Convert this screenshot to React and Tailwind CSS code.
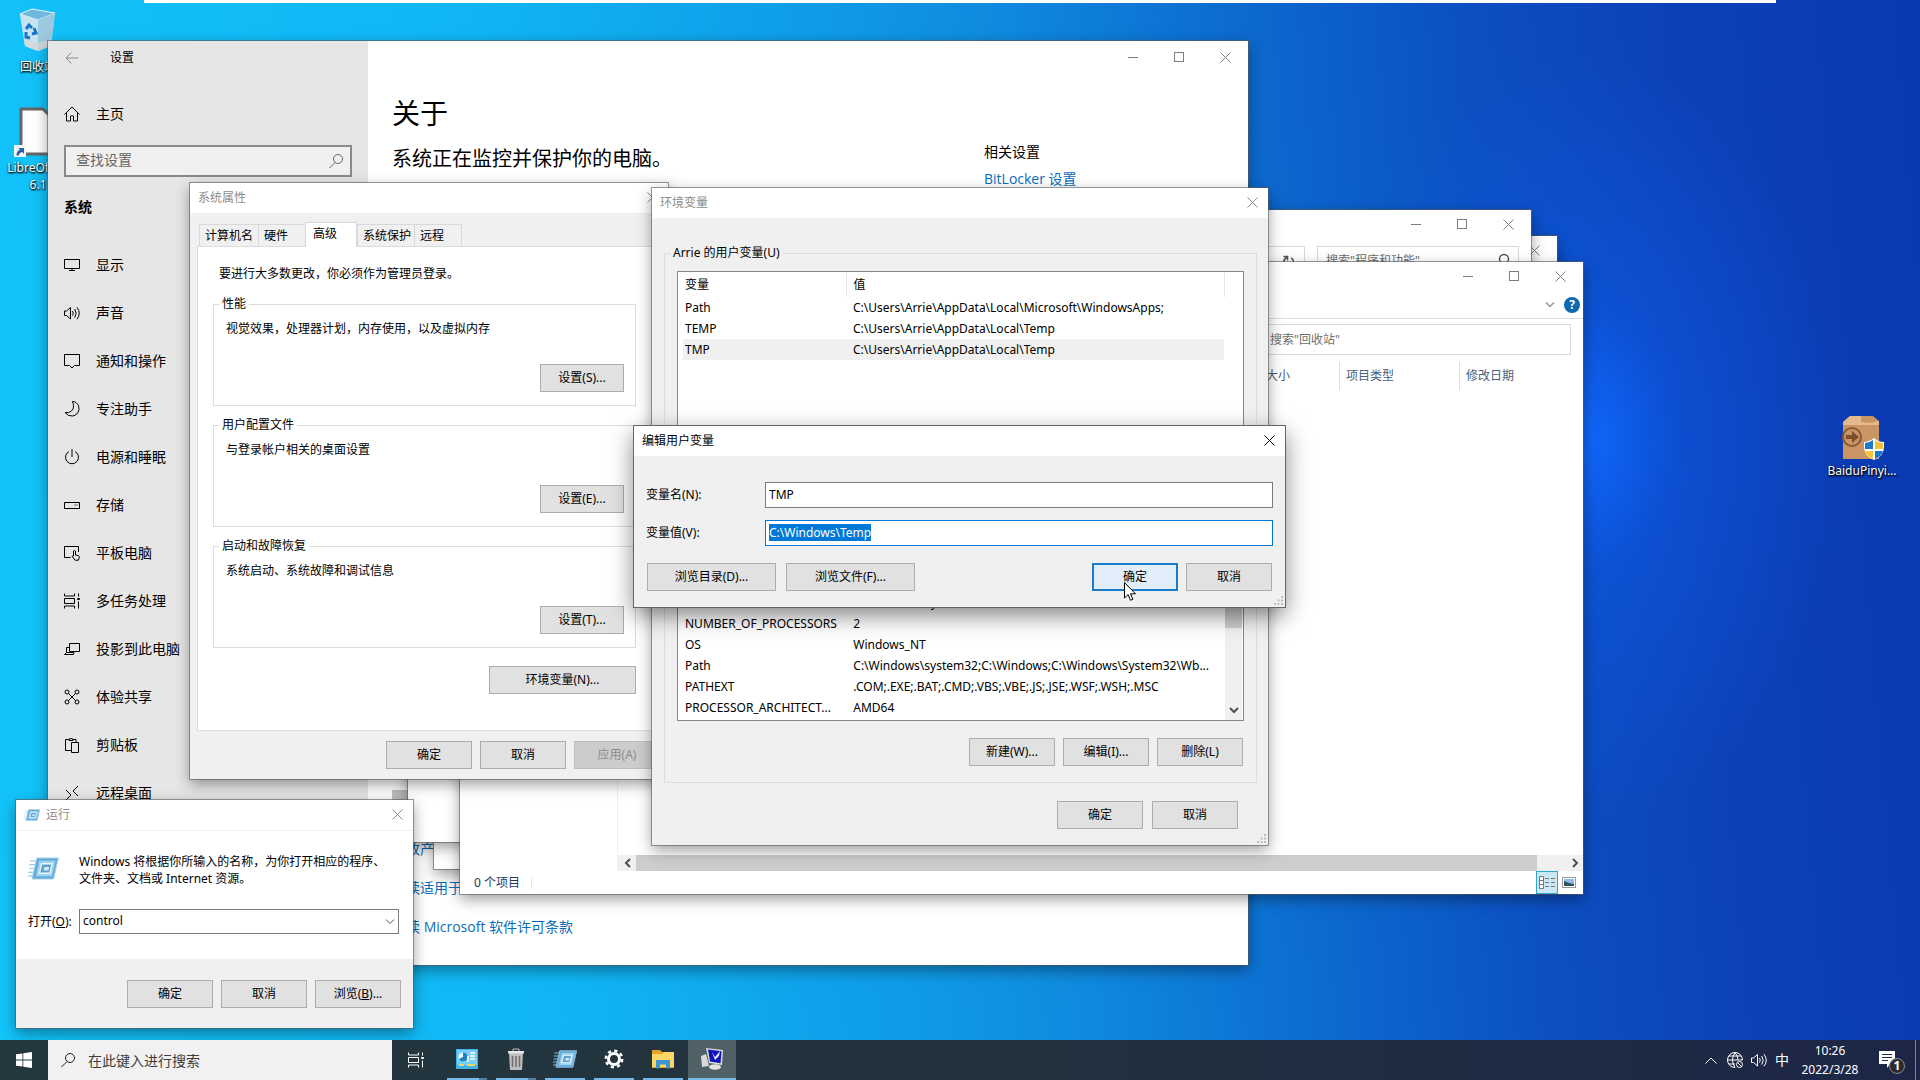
import { useEffect, useRef } from "react";
import clsx from "clsx";

const shadow =
  "shadow-[0_0_0_1px_rgba(90,90,90,0.6),0_5px_14px_rgba(0,0,0,0.4)]";

const navItems = [
  { label: "显示", icon: "display" },
  { label: "声音", icon: "sound" },
  { label: "通知和操作", icon: "notify" },
  { label: "专注助手", icon: "moon" },
  { label: "电源和睡眠", icon: "power" },
  { label: "存储", icon: "storage" },
  { label: "平板电脑", icon: "tablet" },
  { label: "多任务处理", icon: "tasks" },
  { label: "投影到此电脑", icon: "project" },
  { label: "体验共享", icon: "share" },
  { label: "剪贴板", icon: "clipboard" },
  { label: "远程桌面", icon: "remote" },
];

const userVars = [
  ["Path", "C:\\Users\\Arrie\\AppData\\Local\\Microsoft\\WindowsApps;"],
  ["TEMP", "C:\\Users\\Arrie\\AppData\\Local\\Temp"],
  ["TMP", "C:\\Users\\Arrie\\AppData\\Local\\Temp"],
];

const systemVars = [
  ["DriverData", "C:\\Windows\\System32\\Drivers\\DriverData"],
  ["NUMBER_OF_PROCESSORS", "2"],
  ["OS", "Windows_NT"],
  ["Path", "C:\\Windows\\system32;C:\\Windows;C:\\Windows\\System32\\Wb..."],
  ["PATHEXT", ".COM;.EXE;.BAT;.CMD;.VBS;.VBE;.JS;.JSE;.WSF;.WSH;.MSC"],
  ["PROCESSOR_ARCHITECT...", "AMD64"],
];

const tabs = [
  { label: "计算机名", width: "w-[60px]" },
  { label: "硬件", width: "w-12" },
  { label: "高级", width: "w-[52px]" },
  { label: "系统保护", width: "w-[58px]" },
  { label: "远程", width: "w-12" },
];

const groups = [
  { title: "性能", text: "视觉效果，处理器计划，内存使用，以及虚拟内存", key: "S" },
  { title: "用户配置文件", text: "与登录帐户相关的桌面设置", key: "E" },
  { title: "启动和故障恢复", text: "系统启动、系统故障和调试信息", key: "T" },
];

const glyphs = {
  back: <path d="M14 8H2M7.500 2.500L2 8l5.500 5.500" />,
  home: <path d="M2.500 7v8h4v-5h3v5h4V7M.500 8.500L8 1l7.500 7.500" />,
  search: (
    <>
      <circle cx="10" cy="6" r="4.500" />
      <path d="M7 9.500L1.500 15" />
    </>
  ),
  display: <path d="M.5 2.500h15v9H.5zM8 11.500v2M5 13.500h6" />,
  sound: (
    <path d="M.5 6v4.500h2L6.500 14V2.500L2.500 6zM8.500 6q1.500 2.200 0 4.500M10.700 4q3 4.200 0 8.500M13 2.300q4.500 6 0 11.900" />
  ),
  notify: <path d="M.5 1.500h15v11h-5L8 15l-2.500-2.500h-5z" />,
  moon: <path d="M8.500.5Q11 7 7.500 10 4.500 12.500 1 11.500 4 15.500 8.500 15q5.500-1 6.500-6.500.5-5-3-7-1.500-1-3.500-1z" />,
  power: <path d="M8 0v8M5 2.500a6.500 6.500 0 1 0 6 0" />,
  storage: <path d="M.5 5.500h15v6H.5zM12.500 8h1M10.500 8h1" />,
  tablet: (
    <path d="M6.500 12.500h-6v-11h14V7M9.500 11V6q1-1 2 0v4l3 .7q1 .5.8 1.500l-.8 3h-3.500l-3-4z" />
  ),
  tasks: (
    <path d="M.5.500v2.500h10V.500M.500 5.500h10v5H.500zM.500 15.500V13h10v2.500M14.500.500v3M14.500 8.500v7M13.500 5.500h2v1h-2z" />
  ),
  project: <path d="M5.500 2.500h10v8h-10zM5.500 6.500h-3v5h7v-1M2.500 11.500l-2 2h9l.5-2" />,
  share: (
    <>
      <circle cx="3" cy="3" r="2" />
      <circle cx="13" cy="3" r="2" />
      <circle cx="3" cy="13" r="2" />
      <circle cx="13" cy="13" r="2" />
      <path d="M4.500 4.500l7 7M11.500 4.500l-7 7" />
    </>
  ),
  clipboard: (
    <path d="M7 13.500H1.500v-11H5M9 2.500h3V5M5 3.500v-1.500h1.200q.8-2 1.600 0H9v1.500zM7.500 5.500h7v10h-7z" />
  ),
  remote: <path d="M2 5l5 5-5 5M14 1L9 6l5 5" />,
};

function Icon({ name, className }) {
  return (
    <svg
      viewBox="0 0 16 16"
      aria-hidden="true"
      className={clsx("h-4 w-4 shrink-0 fill-none stroke-current", className)}
    >
      {glyphs[name]}
    </svg>
  );
}

function CloseGlyph() {
  return (
    <svg viewBox="0 0 11 11" aria-hidden="true" className="h-[11px] w-[11px] stroke-current">
      <path d="M.5.500l10 10M10.500.500l-10 10" />
    </svg>
  );
}

function Caption() {
  return (
    <div className="ml-auto flex text-[#7d7d7d]">
      <button type="button" aria-label="最小化" className="flex h-7 w-[46px] items-center justify-center">
        <span className="h-px w-[10px] bg-current" />
      </button>
      <button type="button" aria-label="最大化" className="flex h-7 w-[46px] items-center justify-center">
        <span className="h-[10px] w-[10px] border border-current" />
      </button>
      <button type="button" aria-label="关闭" className="flex h-7 w-[46px] items-center justify-center">
        <CloseGlyph />
      </button>
    </div>
  );
}

function Window({ label, className, children }) {
  return (
    <section
      aria-label={label}
      className={clsx("absolute flex flex-col overflow-hidden bg-white", className)}
    >
      {children}
    </section>
  );
}

function DialogTitle({ active, icon, children }) {
  return (
    <header
      className={clsx(
        "flex h-[30px] shrink-0 items-center gap-1.5 bg-white pl-2",
        active ? "text-black" : "text-[#8c8c8c]"
      )}
    >
      {icon}
      <h2>{children}</h2>
      <button
        type="button"
        aria-label="关闭"
        className="ml-auto flex h-7 w-[31px] items-center justify-center self-start"
      >
        <CloseGlyph />
      </button>
    </header>
  );
}

function Button({ className = "w-[86px]", primary, children, ...rest }) {
  return (
    <button
      type="button"
      className={clsx(
        "h-7 shrink-0 text-center",
        primary
          ? "border-2 border-[#1a7cc9] bg-[#e1eefa]"
          : "border border-[#adadad] bg-[#e1e1e1] disabled:border-[#bfbfbf] disabled:bg-[#cccccc] disabled:text-[#8c8c8c]",
        className
      )}
      {...rest}
    >
      {children}
    </button>
  );
}

// Both kinds of group have 12px of left padding, which the legend steps back over.
function Group({ title, className, children, ...rest }) {
  return (
    <fieldset className={clsx("flex flex-col border border-[#dcdcdc]", className)} {...rest}>
      {title && <legend className="-ml-[7px] px-[3px] leading-[18px]">{title}</legend>}
      {children}
    </fieldset>
  );
}

function Grip() {
  return (
    <svg viewBox="0 0 9 9" aria-hidden="true" className="absolute right-0.5 bottom-0.5 h-[9px] w-[9px] fill-[#bdbdbd]">
      <path d="M7 0h2v2H7zM7 3.500h2v2H7zM3.500 3.500h2v2h-2zM7 7h2v2H7zM3.500 7h2v2h-2zM0 7h2v2H0z" />
    </svg>
  );
}

function RunIcon({ className }) {
  return (
    <svg viewBox="0 0 32 24" aria-hidden="true" className={className}>
      <path d="M2 4h8M1 8h8M1 12h7M0 16h7M0 20h6" stroke="#9ccdeb" strokeWidth="1.200" />
      <path d="M9 1h22.500l-5 22H4z" fill="#64abd9" stroke="#a9d3ec" />
      <path d="M11.500 4h17l-3.600 16H8z" fill="#9ed2f1" />
      <path d="M14 7h11l-2.300 10h-11z" fill="#5aa3d4" stroke="#e9f6fd" strokeWidth="1.500" />
      <path d="M17 10.500h5l-.8 3.500h-5z" fill="#cfeafa" />
    </svg>
  );
}

function Desktop() {
  const label =
    "text-center leading-[17px] text-white [text-shadow:0_1px_2px_#000,1px_1px_2px_#000]";
  return (
    <>
      <div className="absolute top-2 left-0 flex w-[76px] flex-col items-center">
        <svg viewBox="0 0 40 44" aria-hidden="true" className="h-11 w-10">
          <path d="M2 6L14 1l23 4-4 33-13 5-13-5z" fill="#a9d5ec" />
          <path d="M2 6l18 6 17-7L14 1z" fill="#6fb9dd" stroke="#e3f2f9" />
          <path d="M2 6l18 6v31L7 38z" fill="#c7e2f0" />
          <path d="M20 12l17-7-4 33-13 5z" fill="#9dc9e0" />
          <path d="M6 31l14 4 14-4-1 7-13 5-13-5z" fill="#d5d9da" opacity=".8" />
          <path
            d="M8 21l3-4 3 3M16 20l2 5-4 1M12 30l-4-1v-5"
            fill="none"
            stroke="#1677c9"
            strokeWidth="3"
          />
        </svg>
        <span className={clsx(label, "pt-1.5")}>回收站</span>
      </div>
      <div className="absolute top-[107px] left-0 flex w-[76px] flex-col items-center">
        <div className="relative h-[50px] w-10">
          <svg viewBox="0 0 40 50" aria-hidden="true" className="h-full w-full">
            <path d="M3 2h22l13 13v32H3z" fill="#fff" stroke="#666" strokeWidth="3" strokeLinejoin="round" />
          </svg>
          <svg viewBox="0 0 12 12" aria-hidden="true" className="absolute -left-1 bottom-0 h-3 w-3">
            <path d="M0 0h12v12H0z" fill="#f4f4f4" />
            <path d="M2.500 10.500Q2.500 5.500 6 5L4.500 3H10v6L8.300 7Q5 7.500 5 10.500z" fill="#2c5fa8" />
          </svg>
        </div>
        <span className={clsx(label, "mt-0.5 w-16")}>LibreOffice 6.1</span>
      </div>
      <div className="absolute top-[414px] left-[1822px] flex w-20 flex-col items-center">
        <svg viewBox="0 0 44 46" aria-hidden="true" className="h-[46px] w-11">
          <path d="M3 8l7-6h23l6 5v38H3z" fill="#c99565" />
          <path d="M3 8l7-6h11v6l9 1 9-2v4H3z" fill="#e3b98e" />
          <circle cx="12" cy="23" r="9" fill="none" stroke="#8a5a33" strokeWidth="2" />
          <path d="M6 21h6v-4l7 6-7 6v-4H6z" fill="#7d4f2b" />
          <path d="M24 28q5 0 10-4 4 4 10 4v5q0 9-10 13-10-4-10-13z" fill="#fff" />
          <path d="M25 29q4 0 8-3v9h-8z" fill="#1a78c8" />
          <path d="M35 26q4 3 8 3v6h-8z" fill="#f6c338" />
          <path d="M25 37h8v8q-6-2-8-8z" fill="#f6c338" />
          <path d="M35 37h8q-2 6-8 8z" fill="#1a78c8" />
        </svg>
        <span className={clsx(label, "mt-0.5")}>BaiduPinyi...</span>
      </div>
    </>
  );
}

function SettingsWindow() {
  const link = "w-fit text-[#0a6cb8] leading-5";
  return (
    <Window
      label="设置"
      className={clsx(
        "top-[41px] left-12 h-[924px] w-[1200px] font-['Open_Sans','Noto_Sans_CJK_SC',sans-serif] text-sm",
        shadow
      )}
    >
      <div className="flex min-h-0 flex-1">
        <aside className="flex w-80 shrink-0 flex-col bg-[#e6e6e6]">
          <header className="flex h-[33px] items-center gap-[30px] pl-4 text-xs">
            <button type="button" aria-label="后退" className="text-[#8a8a8a]">
              <Icon name="back" />
            </button>
            <h1>设置</h1>
          </header>
          <a href="#home" className="mt-4 flex h-12 items-center gap-4 pl-4">
            <Icon name="home" />
            主页
          </a>
          <label className="mx-4 mt-[7px] flex h-8 items-center border-2 border-[#8a8a8a] bg-[#f0f0f0] pr-1.5 pl-2.5">
            <input
              aria-label="查找设置"
              placeholder="查找设置"
              className="min-w-0 flex-1 pb-0.5 outline-none placeholder:text-[#666]"
            />
            <Icon name="search" className="h-3.5 w-3.5 text-[#666]" />
          </label>
          <h2 className="mt-5 pl-4 leading-5 font-bold">系统</h2>
          <nav className="mt-6">
            {navItems.map((item) => (
              <a
                key={item.icon}
                href={"#" + item.icon}
                className="flex h-12 items-center gap-4 pl-4"
              >
                <Icon name={item.icon} />
                {item.label}
              </a>
            ))}
          </nav>
        </aside>
        <div className="flex min-w-0 flex-1 flex-col">
          <div className="flex h-8 items-center">
            <Caption />
          </div>
          <div className="flex flex-1 justify-between pr-[60px] pl-6">
            <main className="flex flex-col">
              <h2 className="mt-5 text-[28px] leading-10">关于</h2>
              <p className="mt-2.5 text-xl leading-8">系统正在监控并保护你的电脑。</p>
              <div className="mt-[615px] h-[18px] w-4 bg-[#c2c2c2]" />
              <a href="#key" className={clsx(link, "mt-[31px]")}>更改产品</a>
              <a href="#services" className={clsx(link, "mt-[19px]")}>阅读适用于</a>
              <a href="#license" className={clsx(link, "mt-[19px]")}>
                阅读 Microsoft 软件许可条款
              </a>
            </main>
            <div className="w-[204px] pt-[69px]">
              <h3 className="leading-5">相关设置</h3>
              <a href="#bitlocker" className={clsx(link, "mt-[7px] block")}>
                BitLocker 设置
              </a>
            </div>
          </div>
        </div>
      </div>
    </Window>
  );
}

function ControlPanelWindow() {
  return (
    <Window label="控制面板" className={clsx("top-[236px] left-[434px] h-[633px] w-[1123px]", shadow)}>
      <div className="flex">
        <Caption />
      </div>
    </Window>
  );
}

function ProgramsWindow() {
  return (
    <Window label="程序和功能" className={clsx("top-[210px] left-[408px] h-[632px] w-[1123px]", shadow)}>
      <div className="flex">
        <Caption />
      </div>
      <div className="mt-2 flex gap-3 px-3">
        <div className="flex h-[30px] flex-1 items-center justify-end border border-[#d9d9d9] pr-2.5">
          <svg viewBox="0 0 12 12" aria-hidden="true" className="h-3 w-3 fill-none stroke-[#555] stroke-[1.500]">
            <path d="M1.500 1.500h4v4M5 2Q1 4.500 2 8t4 3.500 5-3-2-5.500" />
          </svg>
        </div>
        <label className="flex h-[30px] w-[202px] items-center border border-[#d9d9d9] px-2">
          <input
            aria-label="搜索程序和功能"
            placeholder={'搜索"程序和功能"'}
            className="min-w-0 flex-1 outline-none placeholder:text-[#6d6d6d]"
          />
          <Icon name="search" className="h-3 w-3 stroke-[1.5] text-[#555]" />
        </label>
      </div>
    </Window>
  );
}

function RecycleBinWindow() {
  const head = "flex h-7 items-center border-l border-[#e0e0e0] pl-1.5 font-normal text-[#45607c]";
  return (
    <Window label="回收站" className={clsx("top-[262px] left-[460px] h-[632px] w-[1123px]", shadow)}>
      <div className="flex h-[30px]">
        <Caption />
      </div>
      <div className="flex h-[27px] items-center justify-end gap-[9px] border-b border-[#dcdcdc] pr-[3px]">
        <svg viewBox="0 0 10 6" aria-hidden="true" className="h-1.5 w-2.5 fill-none stroke-[#999] stroke-[1.500]">
          <path d="M1 .5l4 4 4-4" />
        </svg>
        <button
          type="button"
          aria-label="帮助"
          className="h-4 w-4 rounded-full bg-[#0f68b0] text-center leading-4 font-bold text-white"
        >
          ?
        </button>
      </div>
      <div className="flex justify-end pt-[5px] pr-3">
        <input
          aria-label="搜索回收站"
          placeholder={'搜索"回收站"'}
          className="h-[31px] w-[312px] border border-[#d9d9d9] pl-2.5 outline-none placeholder:text-[#6d6d6d]"
        />
      </div>
      <div className="flex min-h-0 flex-1">
        <div className="w-[158px] border-r border-[#f0f0f0]" />
        <div className="flex min-w-0 flex-1 flex-col">
          <div className="mt-[7px] flex justify-end">
            <div className={clsx(head, "w-20")}>大小</div>
            <div className={clsx(head, "w-[120px]")}>项目类型</div>
            <div className={clsx(head, "w-[124px]")}>修改日期</div>
          </div>
          <div className="mt-auto flex h-4 items-center bg-[#f0f0f0]">
            <svg viewBox="0 0 18 16" aria-hidden="true" className="h-4 w-[18px] fill-none stroke-[#505050] stroke-2">
              <path d="M12 4L8 8l4 4" />
            </svg>
            <div className="h-full flex-1 bg-[#cdcdcd]" />
            <svg viewBox="0 0 46 16" aria-hidden="true" className="h-4 w-[46px] fill-none stroke-[#505050] stroke-2">
              <path d="M36 4l4 4-4 4" />
            </svg>
          </div>
        </div>
      </div>
      <footer className="flex h-[23px] shrink-0 items-center pr-[7px] pl-3.5 text-[#1e395b]">
        <span>0 个项目</span>
        <span className="ml-[11px] h-3 w-px bg-[#e8e8e8]" />
        <button
          type="button"
          aria-label="详细信息"
          className="ml-auto flex h-full w-[22px] items-center justify-center border border-[#2fa5cf] bg-[#cbe8f6]"
        >
          <svg viewBox="0 0 16 13" aria-hidden="true" className="h-[13px] w-4 fill-white stroke-[#777]">
            <path d="M.5.500h4v12h-4zM.5 4.500h4M.5 8.500h4M6 2.500h4M12 2.500h4M6 6.500h4M12 6.500h4M6 10.500h4M12 10.500h4" />
          </svg>
        </button>
        <button type="button" aria-label="大缩略图" className="ml-1 border border-[#999] p-px">
          <svg viewBox="0 0 10 7" aria-hidden="true" className="h-[7px] w-2.5">
            <path d="M0 0h10v7H0z" fill="#8fb8ef" />
            <path d="M0 2l5 2 5 1v2H0z" fill="#2d5560" />
          </svg>
        </button>
      </footer>
    </Window>
  );
}

function SystemProperties() {
  return (
    <Window label="系统属性" className={clsx("top-[183px] left-[190px] w-[478px]", shadow)}>
      <DialogTitle>系统属性</DialogTitle>
      <div className="bg-[#f0f0f0] pr-2 pl-[7px]">
        <div role="tablist" className="flex h-[33px] items-end pl-0.5">
          {tabs.map((tab) => {
            const selected = tab.label === "高级";
            return (
              <button
                key={tab.label}
                type="button"
                role="tab"
                aria-selected={selected}
                className={clsx(
                  "border border-b-0 border-[#d9d9d9] text-left whitespace-nowrap",
                  tab.width,
                  selected
                    ? "relative z-10 -mb-px h-[25px] bg-white pb-0.5 pl-[7px]"
                    : "-mr-px h-[22px] pl-[5px]"
                )}
              >
                {tab.label}
              </button>
            );
          })}
        </div>
        <div role="tabpanel" className="flex flex-col border border-[#dcdcdc] bg-white pt-[18px] pr-[23px] pb-9 pl-[15px]">
          <p className="pl-1.5 leading-[18px]">要进行大多数更改，你必须作为管理员登录。</p>
          <div className="mt-3 flex flex-col gap-2.5">
            {groups.map((group) => (
              <Group key={group.key} title={group.title} className="pr-[11px] pb-[13px] pl-3">
                <p className="mt-[7px] leading-[18px]">{group.text}</p>
                <Button className="mt-[26px] w-[84px] self-end">设置({group.key})...</Button>
              </Group>
            ))}
          </div>
          <Button className="mt-[18px] w-[147px] self-end">环境变量(N)...</Button>
        </div>
        <div className="flex justify-end gap-2 py-2.5">
          <Button>确定</Button>
          <Button>取消</Button>
          <Button disabled>应用(A)</Button>
        </div>
      </div>
    </Window>
  );
}

function VarRows({ rows, selected }) {
  return (
    <tbody>
      {rows.map(([name, value], i) => (
        <tr key={name} className={clsx("h-[21px]", i === selected && "bg-[#f0f0f0]")}>
          <td className="w-[163px] pl-0.5 whitespace-nowrap">{name}</td>
          <td className="w-[378px] pl-[7px] whitespace-nowrap">{value}</td>
        </tr>
      ))}
    </tbody>
  );
}

function EnvironmentVariables() {
  return (
    <Window label="环境变量" className={clsx("top-[188px] left-[652px] w-[616px]", shadow)}>
      <DialogTitle>环境变量</DialogTitle>
      <div className="flex flex-col gap-[9px] bg-[#f0f0f0] pt-[26px] pr-[11px] pb-4 pl-3">
        <Group title="Arrie 的用户变量(U)" className="h-[235px] px-3 pt-[9px]">
          <div className="h-[170px] border border-[#828790] bg-white pl-[5px]">
            <table className="table-fixed border-collapse">
              <thead>
                <tr className="h-[25px] text-left">
                  <th className="w-[163px] border-r border-[#e5e5e5] pl-0.5 font-normal">变量</th>
                  <th className="w-[378px] border-r border-[#e5e5e5] pl-[7px] font-normal">值</th>
                </tr>
              </thead>
              <VarRows rows={userVars} selected={2} />
            </table>
          </div>
        </Group>
        <Group aria-label="系统变量(S)" className="px-3 pt-[26px] pb-4">
          <div className="flex h-[206px] border border-[#828790] bg-white pl-[5px]">
            <div className="flex flex-1 flex-col justify-end pb-0.5">
              <table className="table-fixed border-collapse">
                <VarRows rows={systemVars} />
              </table>
            </div>
            <div className="mr-px flex w-[17px] flex-col items-center bg-[#f0f0f0]">
              <div className="mt-[30px] h-[82px] w-full bg-[#cdcdcd]" />
              <svg viewBox="0 0 10 7" aria-hidden="true" className="mt-auto mb-1.5 h-[7px] w-2.5 fill-none stroke-[#505050] stroke-2">
                <path d="M1 1l4 4 4-4" />
              </svg>
            </div>
          </div>
          <div className="mt-[17px] mr-px flex justify-end gap-2">
            <Button>新建(W)...</Button>
            <Button>编辑(I)...</Button>
            <Button>删除(L)</Button>
          </div>
        </Group>
        <div className="mt-[9px] mr-[19px] flex justify-end gap-[9px]">
          <Button>确定</Button>
          <Button>取消</Button>
        </div>
      </div>
      <Grip />
    </Window>
  );
}

function EditVariable() {
  const valueRef = useRef(null);

  useEffect(() => {
    valueRef.current.focus({ preventScroll: true });
    valueRef.current.select();
  }, []);

  const field = "h-[26px] min-w-0 flex-1 border bg-white px-[3px] pb-0.5 outline-none";
  return (
    <Window
      label="编辑用户变量"
      className="top-[426px] left-[634px] w-[651px] shadow-[0_0_0_1px_#666,0_8px_22px_rgba(0,0,0,0.5)]"
    >
      <DialogTitle active>编辑用户变量</DialogTitle>
      <form className="flex flex-col gap-3 bg-[#f0f0f0] px-3 pt-[26px] pb-4">
        <label className="flex items-center">
          <span className="w-[119px]">变量名(N):</span>
          <input defaultValue="TMP" className={clsx(field, "border-[#7a7a7a]")} />
        </label>
        <label className="flex items-center">
          <span className="w-[119px]">变量值(V):</span>
          <input
            ref={valueRef}
            defaultValue="C:\Windows\Temp"
            className={clsx(field, "border-[#0078d7] selection:bg-[#0078d7] selection:text-white")}
          />
        </label>
        <div className="mx-px mt-[5px] flex gap-2.5">
          <Button className="w-[129px]">浏览目录(D)...</Button>
          <Button className="w-[129px]">浏览文件(F)...</Button>
          <div className="ml-auto flex gap-2">
            <Button primary>确定</Button>
            <Button>取消</Button>
          </div>
        </div>
      </form>
      <Grip />
    </Window>
  );
}

function RunDialog() {
  return (
    <Window label="运行" className={clsx("top-[800px] left-4 w-[397px]", shadow)}>
      <DialogTitle icon={<RunIcon className="h-3 w-4" />}>运行</DialogTitle>
      <div className="flex h-[129px] flex-col border-t border-[#f0f0f0] pr-3.5 pl-3">
        <div className="mt-[22px] flex gap-5">
          <RunIcon className="mt-1 h-[23px] w-[31px]" />
          <p className="leading-[17px]">
            Windows 将根据你所输入的名称，为你打开相应的程序、
            <br />
            文件夹、文档或 Internet 资源。
          </p>
        </div>
        <div className="mt-[22px] flex items-center">
          <label htmlFor="run-open" className="w-[51px]">
            打开(<u>O</u>):
          </label>
          <div className="flex h-[25px] flex-1 items-center border border-[#7a7a7a]">
            <input
              id="run-open"
              defaultValue="control"
              className="min-w-0 flex-1 px-[3px] pb-0.5 outline-none"
            />
            <button type="button" aria-label="展开" className="flex w-[17px] justify-center">
              <svg viewBox="0 0 10 6" aria-hidden="true" className="h-1.5 w-2.5 fill-none stroke-[#555]">
                <path d="M1 .5l4 4 4-4" />
              </svg>
            </button>
          </div>
        </div>
      </div>
      <div className="flex justify-end gap-2 bg-[#f0f0f0] pt-[21px] pr-3 pb-5">
        <Button>确定</Button>
        <Button>取消</Button>
        <Button>
          浏览(<u>B</u>)...
        </Button>
      </div>
    </Window>
  );
}

const taskIcons = [
  {
    label: "控制面板",
    stacked: true,
    icon: (
      <svg viewBox="0 0 22 20" aria-hidden="true" className="h-5 w-[22px]">
        <path d="M0 0h22v20H0z" fill="#3fb4e8" />
        <path d="M1 1h20v15H1z" fill="#72d0f7" />
        <circle cx="7" cy="8" r="4.500" fill="#e9f7fe" />
        <path d="M7 8V3.500a4.500 4.500 0 1 1-4 6.500z" fill="#1f7fc0" />
        <path d="M14 4h5M14 7h5M14 10h5M12 13V7" stroke="#fff" strokeWidth="1.500" />
        <path d="M3 16h5M11 16h8" stroke="#f5d35f" strokeWidth="2" />
      </svg>
    ),
  },
  {
    label: "卸载工具",
    stacked: true,
    icon: (
      <svg viewBox="0 0 18 22" aria-hidden="true" className="h-[22px] w-[18px]">
        <path d="M6 3V1h6v2" fill="none" stroke="#bbb" />
        <path d="M2 5h14l-1 17H3z" fill="#bdbdbd" />
        <path d="M1 3h16v2.500H1z" fill="#e6e6e6" />
        <path d="M5.500 8v11M9 8v11M12.500 8v11" stroke="#6f6f6f" strokeWidth="1.500" />
      </svg>
    ),
  },
  { label: "运行", icon: <RunIcon className="h-[18px] w-6" /> },
  {
    label: "设置",
    icon: (
      <svg viewBox="0 0 20 20" aria-hidden="true" className="h-5 w-5 fill-none stroke-white">
        <circle cx="10" cy="10" r="5.500" strokeWidth="3" />
        <circle cx="10" cy="10" r="8.200" strokeWidth="2.500" strokeDasharray="3.220 3.220" />
      </svg>
    ),
  },
  {
    label: "文件资源管理器",
    icon: (
      <svg viewBox="0 0 22 19" aria-hidden="true" className="h-[19px] w-[22px]">
        <path d="M0 0h8l2 2h12v16H0z" fill="#e0a52a" />
        <path d="M0 4h10l2-2h10v15H0z" fill="#fbd866" />
        <path d="M4 18.500V10h14v8.500h-4v-4H8v4z" fill="#3f93d2" />
      </svg>
    ),
  },
  {
    label: "系统属性",
    active: true,
    icon: (
      <svg viewBox="0 0 24 22" aria-hidden="true" className="h-[22px] w-6">
        <path d="M1 8l5-2 3 12-7 1z" fill="#d9d9d9" />
        <path d="M6 0l17 2-1 15-13-2z" fill="#dcdcd4" />
        <path d="M8 1.500l13.500 1.700-1 12-10.500-1.700z" fill="#1212b8" />
        <path d="M12 4l3 5 5-6-1 5-4 4z" fill="#dfe6ff" />
        <ellipse cx="15" cy="19" rx="6" ry="2.800" fill="#e4e4dc" />
      </svg>
    ),
  },
];

function Taskbar() {
  return (
    <footer className="absolute inset-x-0 bottom-0 flex h-10 bg-linear-to-r from-[#24373f] via-[#21323d] to-[#1d2647] text-white">
      <button type="button" aria-label="开始" className="flex w-12 items-center justify-center">
        <svg viewBox="0 0 16 16" aria-hidden="true" className="h-4 w-4 fill-white">
          <path d="M0 2.300L6.500 1.400v6.200H0zM7.300 1.300L16 0v7.600H7.300zM0 8.400h6.500v6.200L0 13.700zM7.300 8.400H16V16l-8.700-1.300z" />
        </svg>
      </button>
      <label className="flex w-[344px] items-center gap-3 bg-[#f1f1f1] pl-3 text-sm text-[#222]">
        <Icon name="search" />
        <input
          aria-label="搜索"
          placeholder="在此键入进行搜索"
          className="min-w-0 flex-1 pt-px outline-none placeholder:text-[#3c3c3c]"
        />
      </label>
      <button type="button" aria-label="任务视图" className="flex w-12 items-center justify-center">
        <Icon name="tasks" />
      </button>
      <div className="ml-[3px] flex gap-px">
        {taskIcons.map((task) => (
          <button
            key={task.label}
            type="button"
            aria-label={task.label}
            className={clsx("flex w-12 flex-col items-center", task.active && "bg-[#4f6067]")}
          >
            <span className="flex flex-1 items-center">{task.icon}</span>
            <span className={clsx("flex h-0.5 bg-[#76b9ed]", task.active ? "w-12" : "w-10")}>
              {task.stacked && <span className="ml-auto w-2 bg-[#557f9f]" />}
            </span>
          </button>
        ))}
      </div>
      <div className="ml-auto flex items-center">
        <svg viewBox="0 0 12 7" aria-hidden="true" className="h-[7px] w-3 fill-none stroke-white">
          <path d="M.5 6.500L6 1l5.500 5.500" />
        </svg>
        <svg viewBox="0 0 16 16" aria-hidden="true" className="ml-2.5 h-4 w-4 fill-none stroke-white">
          <path d="M8 15.500a7.500 7.500 0 1 1 7.500-7.500M.5 8h15M2 4h12M2 12h6M8 .5Q3 8 8 15.500M8 .500q3 3.500 3 7.500" />
          <circle cx="12.500" cy="12.500" r="3" fill="#1d2947" />
          <path d="M10.500 10.500l4 4" />
        </svg>
        <Icon name="sound" className="ml-2" />
        <span className="ml-2 text-sm">中</span>
        <div className="ml-2.5 w-[62px] text-center leading-[19px]">
          <div>10:26</div>
          <div>2022/3/28</div>
        </div>
        <button type="button" aria-label="通知" className="relative ml-4 h-7 w-7">
          <svg viewBox="0 0 28 28" aria-hidden="true" className="h-7 w-7">
            <path d="M2 5h16v13h-5l-3 4v-4H2z" fill="#fff" />
            <path d="M5 8.500h10M5 11.500h10M5 14.500h6" stroke="#1f2a44" />
          </svg>
          <span className="absolute right-0 bottom-0 h-4 w-4 rounded-full border border-[#8a8a8a] bg-[#2b2b2b] text-center leading-[14px] font-bold">
            1
          </span>
        </button>
        <span className="ml-2.5 h-10 w-px bg-[#7c8494]" />
        <span className="w-1" />
      </div>
    </footer>
  );
}

export default function App() {
  return (
    <div className="relative h-screen w-full overflow-hidden bg-[radial-gradient(ellipse_260px_380px_at_1583px_440px,rgba(16,104,255,0.95)_0%,rgba(14,90,232,0.5)_35%,transparent_100%),linear-gradient(85deg,#12c4fa_0%,#10b6f4_28%,#0f9ae6_46%,#0f8ade_54%,#0c68ce_67%,#0c50c2_77%,#0c42b9_87%,#0a38b0_100%)] font-['Noto_Sans','Noto_Sans_CJK_SC',sans-serif] text-xs text-black">
      <Desktop />
      <div className="absolute top-0 left-36 h-[3px] w-[1632px] bg-white" />
      <SettingsWindow />
      <ControlPanelWindow />
      <ProgramsWindow />
      <RecycleBinWindow />
      <SystemProperties />
      <EnvironmentVariables />
      <EditVariable />
      <RunDialog />
      <Taskbar />
      <svg viewBox="0 0 12 19" aria-hidden="true" className="absolute top-[582px] left-[1124px] h-[19px] w-3">
        <path d="M.5.500v15.500l3.600-3.400 2.400 5.700 2.400-1-2.400-5.500h5z" fill="#fff" stroke="#000" />
      </svg>
    </div>
  );
}
